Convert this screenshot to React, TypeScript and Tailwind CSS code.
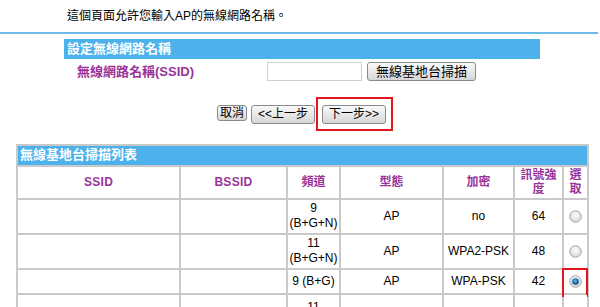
import React from 'react';

const font = { fontFamily: '"Liberation Sans", "Noto Sans CJK TC", sans-serif' };

const Radio: React.FC<{ checked?: boolean }> = ({ checked }) => (
  <svg width="13" height="13" viewBox="0 0 13 13">
    <defs>
      <radialGradient id={checked ? 'rg1' : 'rg0'} cx="50%" cy="40%" r="60%">
        <stop offset="0%" stopColor="#ffffff" />
        <stop offset="100%" stopColor="#d4d4d4" />
      </radialGradient>
      <radialGradient id="dot" cx="45%" cy="40%" r="60%">
        <stop offset="0%" stopColor="#5fc2f0" />
        <stop offset="60%" stopColor="#1878b8" />
        <stop offset="100%" stopColor="#0b3f6e" />
      </radialGradient>
    </defs>
    <circle cx="6.5" cy="6.5" r="5.8" fill={`url(#${checked ? 'rg1' : 'rg0'})`} stroke="#a8a8a8" strokeWidth="1" />
    {checked && <circle cx="6.5" cy="6.5" r="3.3" fill="url(#dot)" />}
  </svg>
);

const Btn: React.FC<{ children: React.ReactNode; className?: string }> = ({ children, className }) => (
  <button
    className={`flex items-center justify-center rounded-[3px] border border-[#8a8a8a] bg-gradient-to-b from-[#fafafa] to-[#d6d6d6] text-[12px] leading-none text-black ${className ?? ''}`}
  >
    {children}
  </button>
);

const cell = 'bg-white flex items-center justify-center text-center text-[12px] leading-[15px] text-black';
const head = 'bg-white flex items-center justify-center text-center text-[12px] leading-[14px] font-bold text-[#993399]';

// last row runs off the bottom of the window, only its channel shows
const rows = [
  { ch: ['9', '(B+G+N)'], type: 'AP', enc: 'no', sig: '64', sel: false, radio: true, h: 'h-[33px]' },
  { ch: ['11', '(B+G+N)'], type: 'AP', enc: 'WPA2-PSK', sig: '48', sel: false, radio: true, h: 'h-[33px]' },
  { ch: ['9 (B+G)'], type: 'AP', enc: 'WPA-PSK', sig: '42', sel: true, radio: true, h: 'h-[23px]' },
  { ch: ['11'], type: '', enc: '', sig: '', sel: false, radio: false, h: 'h-[33px] !items-start pt-[5px]' },
];

export default function App() {
  return (
    <div className="h-[307px] w-[600px] overflow-hidden bg-white" style={font}>
      <p className="pl-[67px] pt-[9px] text-[12px] leading-[14px] text-black">這個頁面允許您輸入AP的無線網路名稱。</p>
      <div className="mt-[9px] h-[2px] w-[598px] bg-[#6cbcea]" />

      <div className="ml-[64px] mt-[5px] w-[476px]">
        <div className="flex h-[20px] items-center bg-[#4db2ec] pl-[3px] text-[13px] font-bold text-white">設定無線網路名稱</div>
        <div className="mt-[3px] flex items-center">
          <span className="ml-[13px] w-[190px] text-[13px] font-bold text-[#993399]">無線網路名稱(SSID)</span>
          <div className="h-[19px] w-[95px] border border-[#cfcfcf] bg-white" />
          <Btn className="ml-[5px] h-[19px] w-[109px] text-[13px]">無線基地台掃描</Btn>
        </div>
      </div>

      <div className="mt-[15px] flex items-start pl-[217px]">
        <Btn className="mt-[8px] h-[16px] w-[30px]">取消</Btn>
        <Btn className="ml-[4px] mt-[8px] h-[19px] w-[64px]">&lt;&lt;上一步</Btn>
        <div className="ml-[1px] border-2 border-[#e8141c] pb-[5px] pl-[4px] pr-[5px] pt-[6px]">
          <Btn className="h-[19px] w-[64px]">下一步&gt;&gt;</Btn>
        </div>
      </div>

      <div className="ml-[16px] mt-[13px] grid w-[573px] grid-cols-[161px_105px_51px_101px_69px_47px_23px] gap-[2px] bg-[#c9c9c9] p-[2px]">
        <div className="col-span-7 flex h-[19px] items-center bg-[#4db2ec] pl-[2px] text-[13px] font-bold text-white">無線基地台掃描列表</div>
        <div className={`${head} h-[31px] tracking-wide`}>SSID</div>
        <div className={`${head} tracking-wide`}>BSSID</div>
        <div className={head}>頻道</div>
        <div className={head}>型態</div>
        <div className={head}>加密</div>
        <div className={head}>訊號強<br />度</div>
        <div className={head}>選<br />取</div>
        {rows.map((r, i) => (
          <React.Fragment key={i}>
            <div className={`${cell} h-[33px] ${i === 2 ? '!h-[23px]' : ''}`} />
            <div className={cell} />
            <div className={`${cell} flex-col ${i === 3 ? '!justify-start pt-[5px]' : ''}`}>
              {r.ch.map((t) => (
                <span key={t}>{t}</span>
              ))}
            </div>
            <div className={cell}>{r.type}</div>
            <div className={cell}>{r.enc}</div>
            <div className={cell}>{r.sig}</div>
            <div className={`${cell} relative`}>
              {r.radio && <Radio checked={r.sel} />}
              {r.sel && (
                <div className="absolute -left-[2px] -top-[2px] h-[29px] w-[26px] border-2 border-[#e8141c]" />
              )}
            </div>
          </React.Fragment>
        ))}
      </div>
    </div>
  );
}
